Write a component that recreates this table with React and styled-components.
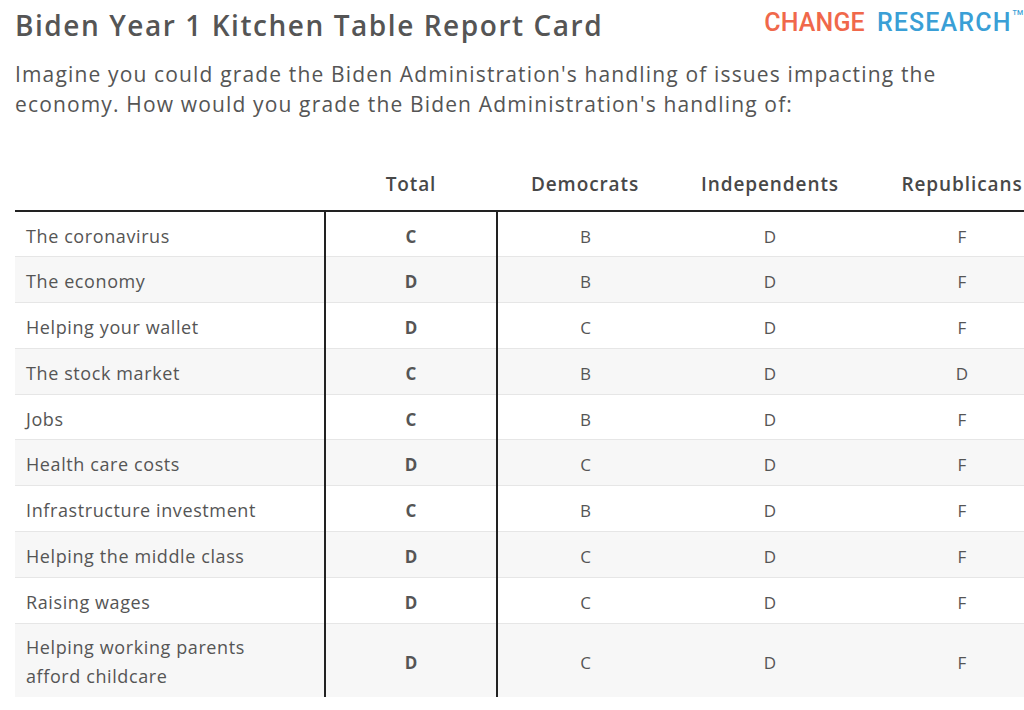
import React from "react";
import styled, { createGlobalStyle } from "styled-components";

const GlobalStyle = createGlobalStyle`
  body {
    margin: 0;
    background: #fff;
    font-family: "Open Sans", Lato, sans-serif;
    overflow: hidden;
  }
`;

const rows = [
  ["The coronavirus", "C", "B", "D", "F"],
  ["The economy", "D", "B", "D", "F"],
  ["Helping your wallet", "D", "C", "D", "F"],
  ["The stock market", "C", "B", "D", "D"],
  ["Jobs", "C", "B", "D", "F"],
  ["Health care costs", "D", "C", "D", "F"],
  ["Infrastructure investment", "C", "B", "D", "F"],
  ["Helping the middle class", "D", "C", "D", "F"],
  ["Raising wages", "D", "C", "D", "F"],
  ["Helping working parents afford childcare", "D", "C", "D", "F"],
];

const App = () => {
  return (
    <>
      <GlobalStyle />
      <Page>
        <TopBar>
          <Title>Biden Year 1 Kitchen Table Report Card</Title>
          <Logo>
            <span className="change">CHANGE</span>
            <span className="research">RESEARCH</span>
            <sup>TM</sup>
          </Logo>
        </TopBar>

        <Question>
          Imagine you could grade the Biden Administration's handling of issues
          impacting the economy. How would you grade the Biden Administration's
          handling of:
        </Question>

        <Table>
          <colgroup>
            <col style={{ width: 310 }} />
            <col style={{ width: 172 }} />
            <col style={{ width: 176 }} />
            <col style={{ width: 194 }} />
            <col style={{ width: 190 }} />
          </colgroup>
          <thead>
            <tr>
              <Th />
              <Th>Total</Th>
              <Th>Democrats</Th>
              <Th>Independents</Th>
              <Th>Republicans</Th>
            </tr>
          </thead>
          <tbody>
            {rows.map((r, i) => (
              <Row key={r[0]} $shade={i % 2 === 1} $tall={i === rows.length - 1}>
                <Label>
                  {i === rows.length - 1 ? (
                    <>
                      Helping working parents
                      <br />
                      afford childcare
                    </>
                  ) : (
                    r[0]
                  )}
                </Label>
                <TotalCell>{r[1]}</TotalCell>
                <Grade>{r[2]}</Grade>
                <Grade>{r[3]}</Grade>
                <Grade>{r[4]}</Grade>
              </Row>
            ))}
          </tbody>
        </Table>
      </Page>
    </>
  );
};

export default App;

const Page = styled.div`
  padding: 5px 0 0 15px;
  color: #555;
`;

const TopBar = styled.div`
  display: flex;
  align-items: flex-start;
  justify-content: space-between;
  width: 1008px;
`;

const Title = styled.h1`
  margin: 0;
  font-size: 28px;
  line-height: 40px;
  font-weight: 600;
  letter-spacing: 1.55px;
  color: #555;
`;

const Logo = styled.div`
  display: flex;
  align-items: flex-start;
  font-family: Roboto, sans-serif;
  font-weight: 500;
  font-size: 25px;
  line-height: 36px;

  .change {
    color: #f0684b;
    letter-spacing: 0.15px;
    margin-right: 12px;
  }
  .research {
    color: #3a9fd6;
    letter-spacing: 1.15px;
  }
  sup {
    font-size: 7px;
    line-height: 16px;
    color: #3a9fd6;
    margin-left: 1px;
  }
`;

const Question = styled.p`
  margin: 14px 0 0;
  width: 945px;
  font-size: 21px;
  line-height: 30px;
  letter-spacing: 1.15px;
  color: #555;
`;

const Table = styled.table`
  margin-top: 41px;
  border-collapse: collapse;
  table-layout: fixed;
  width: 1042px;
`;

const Th = styled.th`
  height: 48px;
  padding: 0 0 2px;
  font-size: 19px;
  font-weight: 600;
  letter-spacing: 0.9px;
  color: #484848;
  text-align: center;
  vertical-align: middle;
  border-bottom: 2px solid #222;
`;

const Row = styled.tr`
  background: ${(p) => (p.$shade ? "#f7f7f7" : "#fff")};
  height: ${(p) => (p.$tall ? "74px" : "45.8px")};
  border-bottom: 1px solid #e6e6e6;

  &:last-child {
    border-bottom: none;
  }
`;

const Label = styled.td`
  padding: 4px 0 0 11px;
  font-size: 18px;
  line-height: 29px;
  letter-spacing: 0.6px;
  color: #555;
`;

const Grade = styled.td`
  padding: 4px 0 0;
  text-align: center;
  font-size: 17px;
  color: #555;
`;

const TotalCell = styled(Grade)`
  font-weight: 700;
  border-left: 2px solid #222;
  border-right: 2px solid #222;
`;
